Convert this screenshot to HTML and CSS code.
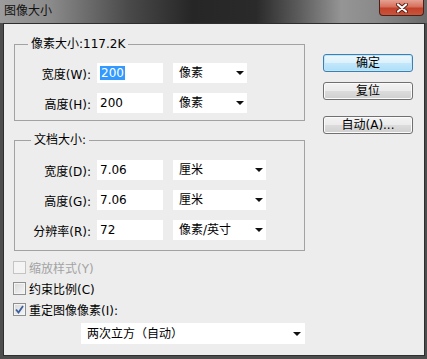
FILE: index.html
```html
<!DOCTYPE html>
<html>
<head>
  <meta charset="utf-8">
  <link rel="stylesheet" href="styles.css">
</head>
<body>
  <div class="window">
    <div class="titlebar">
      <span class="title">图像大小</span>
      <div class="close-btn">
        <svg width="14" height="10" viewBox="0 0 14 10">
          <path d="M3 1.5 L11 8.5 M11 1.5 L3 8.5" stroke="#5a1d12" stroke-width="4" stroke-linecap="round"/>
          <path d="M3 1.5 L11 8.5 M11 1.5 L3 8.5" stroke="#fff" stroke-width="2.2" stroke-linecap="round"/>
        </svg>
      </div>
    </div>

    <div class="client">
      <div class="main">
        <fieldset class="group">
          <legend>像素大小:117.2K</legend>
          <div class="field-row">
            <span class="field-label">宽度(W):</span>
            <div class="text-box"><span class="selected">200</span></div>
            <div class="dropdown unit-short">像素</div>
          </div>
          <div class="field-row">
            <span class="field-label">高度(H):</span>
            <div class="text-box">200</div>
            <div class="dropdown unit-short">像素</div>
          </div>
        </fieldset>

        <fieldset class="group group-doc">
          <legend>文档大小:</legend>
          <div class="field-row">
            <span class="field-label">宽度(D):</span>
            <div class="text-box">7.06</div>
            <div class="dropdown unit-long">厘米</div>
          </div>
          <div class="field-row">
            <span class="field-label">高度(G):</span>
            <div class="text-box">7.06</div>
            <div class="dropdown unit-long">厘米</div>
          </div>
          <div class="field-row">
            <span class="field-label">分辨率(R):</span>
            <div class="text-box">72</div>
            <div class="dropdown unit-long">像素/英寸</div>
          </div>
        </fieldset>

        <div class="options">
          <div class="check-row disabled"><span class="checkbox"></span>缩放样式(Y)</div>
          <div class="check-row"><span class="checkbox"></span>约束比例(C)</div>
          <div class="check-row">
            <span class="checkbox">
              <svg width="9" height="9" viewBox="0 0 9 9">
                <path d="M1 4.5 L3.5 7.5 L8 1" fill="none" stroke="#3b5f9e" stroke-width="1.8"/>
              </svg>
            </span>重定图像像素(I):
          </div>
        </div>

        <div class="dropdown resample">两次立方（自动）</div>
      </div>

      <div class="buttons">
        <button class="btn btn-default">确定</button>
        <button class="btn">复位</button>
        <button class="btn btn-auto">自动(A)...</button>
      </div>
    </div>
  </div>
</body>
</html>
```

FILE: styles.css
```css
body {
  margin: 0;
  padding: 0;
  width: 427px;
  height: 359px;
  overflow: hidden;
  font-family: "DejaVu Sans", "Noto Sans CJK SC", sans-serif;
  font-size: 12px;
  color: #000;
}

.window {
  height: 359px;
  display: flex;
  flex-direction: column;
  background: #4d4d4d;
}

.titlebar {
  height: 23px;
  display: flex;
  justify-content: space-between;
  align-items: flex-start;
  background: linear-gradient(to right, #9c9c9c 0%, #8a8a8a 12%, #4a4a4a 30%, #262626 45%, #2a2a2a 60%, #5c5c5c 70%, #959595 80%, #8a8a8a 88%, #6a6a6a 100%);
}

.title {
  padding-left: 4px;
  line-height: 22px;
  font-size: 12px;
  color: #111;
}

.close-btn {
  width: 45px;
  height: 16px;
  margin-right: 3px;
  box-sizing: border-box;
  border: 1px solid #4a2219;
  border-top: none;
  border-radius: 0 0 4px 4px;
  background: linear-gradient(#e6a192 0%, #d6705c 45%, #c2412b 55%, #c9553c 100%);
  display: flex;
  align-items: center;
  justify-content: center;
}

.client {
  flex: 1;
  margin: 0 2px 3px 3px;
  border: 1px solid #2e2e2e;
  background: #ededed;
  display: flex;
  gap: 18px;
  padding: 12px 0 0 10px;
}

.main {
  width: 291px;
  display: flex;
  flex-direction: column;
}

.group {
  margin: 0;
  padding: 11px 0 7px 0;
  border: 1px solid #a2a2a2;
  width: 291px;
  box-sizing: border-box;
  display: flex;
  flex-direction: column;
  gap: 10px;
}

.group legend {
  margin-left: 13px;
  padding: 0 3px;
  line-height: 16px;
}

.group-doc {
  margin-top: 11px;
  padding-top: 12px;
  padding-bottom: 10px;
}

.group-doc legend {
  margin-left: 16px;
}

.field-row {
  display: flex;
  align-items: center;
  height: 20px;
}

.field-label {
  width: 76px;
  text-align: right;
  margin-right: 6px;
}

.text-box {
  width: 66px;
  height: 20px;
  box-sizing: border-box;
  background: #fff;
  padding-left: 3px;
  line-height: 20px;
  margin-right: 10px;
}

.selected {
  background: #3399ff;
  color: #fff;
  padding: 0 1px;
  line-height: 14px;
  display: inline-block;
}

.dropdown {
  height: 20px;
  box-sizing: border-box;
  background: #fff;
  padding: 0 3px 0 6px;
  line-height: 20px;
  display: flex;
  align-items: center;
}

.dropdown::after {
  content: "";
  margin-left: auto;
  border-left: 4px solid transparent;
  border-right: 4px solid transparent;
  border-top: 4px solid #111;
}

.unit-short {
  width: 74px;
}

.unit-long {
  width: 93px;
}

.options {
  margin-top: 6px;
  margin-left: -1px;
  display: flex;
  flex-direction: column;
}

.check-row {
  height: 21px;
  display: flex;
  align-items: center;
  gap: 3px;
}

.check-row.disabled {
  color: #a3a3a3;
}

.checkbox {
  width: 13px;
  height: 13px;
  box-sizing: border-box;
  border: 1px solid #8e8f8f;
  background: linear-gradient(135deg, #d8d8d8, #f6f6f6);
  box-shadow: inset 0 0 0 1px #f4f4f4;
  display: flex;
  align-items: center;
  justify-content: center;
}

.disabled .checkbox {
  border-color: #c4c4c4;
  background: #f4f4f4;
}

.resample {
  margin-top: 3px;
  margin-left: 67px;
  width: 224px;
  height: 21px;
  padding-right: 4px;
}

.buttons {
  padding-top: 18px;
  display: flex;
  flex-direction: column;
}

.btn {
  width: 90px;
  height: 18px;
  padding: 0;
  border: 1px solid #707070;
  border-radius: 3px;
  background: linear-gradient(#f3f3f3 0%, #ebebeb 50%, #dcdcdc 50%, #cfcfcf 100%);
  box-shadow: inset 0 0 0 1px #fbfbfb;
  font-family: inherit;
  font-size: 12px;
  line-height: 16px;
  color: #000;
}

.btn + .btn {
  margin-top: 10px;
}

.btn-default {
  border-color: #3c7fb1;
  background: linear-gradient(#ecf7fd 0%, #dcf1fc 50%, #c2e7fb 50%, #aedef7 100%);
  box-shadow: inset 0 0 0 1px #bfe6fa;
}

.btn.btn-auto {
  margin-top: 16px;
}
```
